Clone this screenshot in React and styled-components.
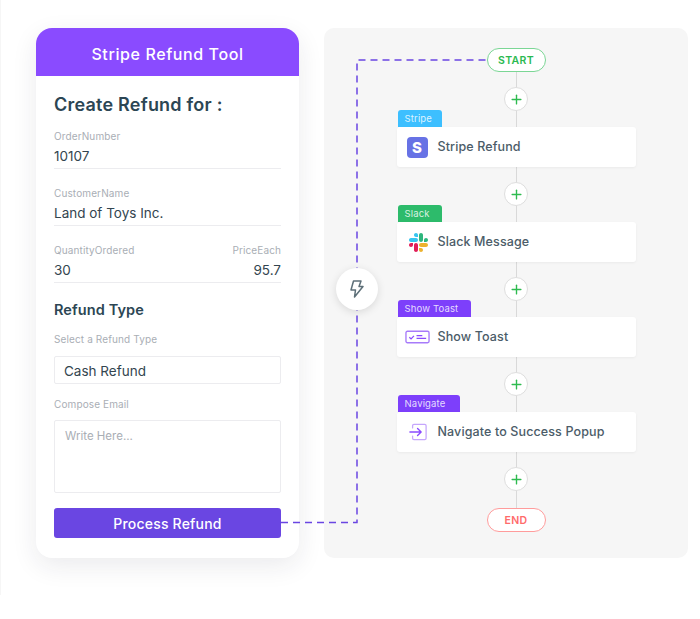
import React from 'react';
import styled, { createGlobalStyle } from 'styled-components';
import { Plus } from 'lucide-react';

const Global = createGlobalStyle`
  html, body { margin: 0; padding: 0; background: #fff; }
  * { box-sizing: border-box; }
  body { font-family: Inter, "Open Sans", sans-serif; }
`;

const Page = styled.div`
  position: relative;
  width: 700px;
  height: 595px;
  padding: 28px 12px 0 35px;
  border-left: 1px solid #f6f6f6;
  display: flex;
  align-items: flex-start;
  gap: 25px;
`;

// left card
const Card = styled.div`
  width: 263px;
  height: 530px;
  flex: none;
  background: #fff;
  border-radius: 16px;
  box-shadow: 0 8px 26px rgba(30, 30, 50, 0.09);
  overflow: hidden;
`;

const CardHeader = styled.div`
  height: 48px;
  padding-top: 4px;
  background: #8a4bff;
  color: #fff;
  font-size: 16px;
  font-weight: 500;
  letter-spacing: 0.6px;
  display: flex;
  align-items: center;
  justify-content: center;
`;

const CardBody = styled.div`
  padding: 19px 18px 20px;
  display: flex;
  flex-direction: column;
`;

const Title = styled.h2`
  margin: 0;
  font-size: 18px;
  line-height: 20px;
  font-weight: 600;
  color: #2c4654;
  letter-spacing: 0.22px;
`;

const SubTitle = styled(Title)`
  margin-top: 17px;
  font-size: 14.5px;
  letter-spacing: 0.1px;
`;

const Field = styled.div`
  margin-top: ${p => p.$top || 18}px;
  height: 39px;
  border-bottom: 1px solid #ececef;
`;

const FieldRow = styled(Field)`
  display: flex;
  justify-content: space-between;
`;

const FieldCell = styled.div`
  text-align: ${p => (p.$right ? 'right' : 'left')};
`;

const Label = styled.div`
  font-size: 10px;
  line-height: 12px;
  color: #a9aeb5;
  letter-spacing: 0.12px;
  padding-top: ${p => p.$top || 0}px;
`;

const Value = styled.div`
  margin-top: 5px;
  font-size: 13.5px;
  line-height: 18px;
  color: #33454f;
`;

const SelectBox = styled.input`
  display: block;
  width: 100%;
  height: 28px;
  margin-top: 11px;
  padding: 2px 9px 0;
  border: 1px solid #ececef;
  border-radius: 2px;
  outline: none;
  font: inherit;
  font-size: 13.5px;
  color: #33454f;
`;

const TextArea = styled.textarea`
  display: block;
  width: 100%;
  height: 73px;
  margin-top: 10px;
  padding: 8px 10px;
  border: 1px solid #ececef;
  border-radius: 2px;
  outline: none;
  resize: none;
  font: inherit;
  font-size: 11.5px;
  &::placeholder { color: #a9aeb5; opacity: 1; }
`;

const Submit = styled.button`
  height: 30px;
  margin-top: 15px;
  padding: 1px 0 0;
  border: none;
  border-radius: 3px;
  background: #6a46e2;
  color: #fff;
  font: inherit;
  font-size: 14px;
  font-weight: 500;
  letter-spacing: 0.2px;
`;

// flow panel
const Panel = styled.div`
  width: 364px;
  height: 530px;
  flex: none;
  background: #f6f6f6;
  border-radius: 10px;
  padding: 20px 0 0 20px;
`;

const Flow = styled.div`
  position: relative;
  display: flex;
  flex-direction: column;
  align-items: center;
  &::before {
    content: '';
    position: absolute;
    top: 10px;
    bottom: 10px;
    left: 50%;
    width: 1px;
    background: #d9d9d9;
  }
`;

const Pill = styled.div`
  position: relative;
  width: 59px;
  height: 24px;
  margin-top: ${p => p.$top || 0}px;
  border: 1.5px solid ${p => p.$border};
  border-radius: 12px;
  background: #fff;
  color: ${p => p.$color};
  font-size: 10.5px;
  font-weight: 600;
  letter-spacing: 0.3px;
  display: flex;
  align-items: center;
  justify-content: center;
`;

const AddButton = styled.div`
  position: relative;
  width: 24px;
  height: 24px;
  margin-top: 15px;
  border: 1.5px solid #dedede;
  border-radius: 50%;
  background: #fff;
  color: #2ebb4f;
  display: flex;
  align-items: center;
  justify-content: center;
`;

const Step = styled.div`
  position: relative;
  width: 239px;
  margin-top: -1px;
`;

const Tag = styled.div`
  width: ${p => p.$width}px;
  height: 17px;
  margin-left: 1px;
  padding-left: 7px;
  border-radius: 3px 3px 0 0;
  background: ${p => p.$bg};
  color: rgba(255, 255, 255, 0.82);
  font-size: 9.5px;
  line-height: 17px;
  letter-spacing: 0.15px;
`;

const StepCard = styled.div`
  height: 40px;
  padding-bottom: 2px;
  background: #fff;
  border-radius: 3px;
  box-shadow: 0 1px 3px rgba(0, 0, 0, 0.05);
  display: flex;
  align-items: center;
  color: #4b5c68;
  font-size: 12.5px;
  font-weight: 450;
  letter-spacing: 0.12px;
`;

const IconSlot = styled.div`
  width: 41px;
  flex: none;
  padding-top: 2px;
  display: flex;
  align-items: center;
  justify-content: center;
`;

const StripeMark = styled.div`
  width: 21px;
  height: 21px;
  border-radius: 4px;
  background: #6772e5;
  color: #fff;
  font-size: 15px;
  font-weight: 800;
  display: flex;
  align-items: center;
  justify-content: center;
`;

const BrandSvg = styled.svg`
  margin-left: ${p => p.$shift || 0}px;
`;

// overlays
const Wire = styled.svg`
  position: absolute;
  left: -1px;
  top: 0;
  pointer-events: none;
`;

const Trigger = styled.div`
  position: absolute;
  left: 335px;
  top: 268px;
  width: 42px;
  height: 42px;
  border-radius: 50%;
  background: #fff;
  box-shadow: 0 2px 8px rgba(0, 0, 0, 0.12);
  color: #5d6f78;
  display: flex;
  align-items: center;
  justify-content: center;
`;

const SlackIcon = () => (
  <BrandSvg $shift={2} width="19" height="19" viewBox="0 0 122.8 122.8">
    <path fill="#E01E5A" d="M25.8 77.6c0 7.1-5.8 12.9-12.9 12.9S0 84.7 0 77.6s5.8-12.9 12.9-12.9h12.9v12.9z" />
    <path fill="#E01E5A" d="M32.3 77.6c0-7.1 5.8-12.9 12.9-12.9s12.9 5.8 12.9 12.9v32.3c0 7.1-5.8 12.9-12.9 12.9s-12.9-5.8-12.9-12.9V77.6z" />
    <path fill="#36C5F0" d="M45.2 25.8c-7.1 0-12.9-5.8-12.9-12.9S38.1 0 45.2 0s12.9 5.8 12.9 12.9v12.9H45.2z" />
    <path fill="#36C5F0" d="M45.2 32.3c7.1 0 12.9 5.8 12.9 12.9s-5.8 12.9-12.9 12.9H12.9C5.8 58.1 0 52.3 0 45.2s5.8-12.9 12.9-12.9h32.3z" />
    <path fill="#2EB67D" d="M97 45.2c0-7.1 5.8-12.9 12.9-12.9s12.9 5.8 12.9 12.9-5.8 12.9-12.9 12.9H97V45.2z" />
    <path fill="#2EB67D" d="M90.5 45.2c0 7.1-5.8 12.9-12.9 12.9s-12.9-5.8-12.9-12.9V12.9C64.7 5.8 70.5 0 77.6 0s12.9 5.8 12.9 12.9v32.3z" />
    <path fill="#ECB22E" d="M77.6 97c7.1 0 12.9 5.8 12.9 12.9s-5.8 12.9-12.9 12.9-12.9-5.8-12.9-12.9V97h12.9z" />
    <path fill="#ECB22E" d="M77.6 90.5c-7.1 0-12.9-5.8-12.9-12.9s5.8-12.9 12.9-12.9h32.3c7.1 0 12.9 5.8 12.9 12.9s-5.8 12.9-12.9 12.9H77.6z" />
  </BrandSvg>
);

const ToastIcon = () => (
  <BrandSvg $shift={1} width="25" height="14" viewBox="0 0 26 14" fill="none" stroke="#a77bfa">
    <rect x="1" y="1" width="24" height="12" rx="1.5" strokeWidth="1.4" />
    <path d="M4.5 7.2l1.8 1.8 3-3.2" strokeWidth="1.3" stroke="#8a4bff" />
    <path d="M12 5.5h6M12 8.5h10" strokeWidth="1.3" stroke="#8a4bff" />
  </BrandSvg>
);

const NavigateIcon = () => (
  <BrandSvg $shift={2} width="18" height="18" viewBox="0 0 20 19" fill="none" strokeLinecap="round" strokeLinejoin="round">
    <path d="M4 5V2.5A1.5 1.5 0 0 1 5.5 1h12A1.5 1.5 0 0 1 19 2.5v14a1.5 1.5 0 0 1-1.5 1.5h-12A1.5 1.5 0 0 1 4 16.5V14" stroke="#c5a6fc" strokeWidth="1.4" />
    <path d="M1 9.5h12M9.5 5.5l4 4-4 4" stroke="#8a4bff" strokeWidth="1.5" />
  </BrandSvg>
);

const BoltIcon = () => (
  <svg width="14" height="18" viewBox="0 0 14 18" fill="none" stroke="currentColor" strokeWidth="1.5" strokeLinejoin="round">
    <path d="M3.5 1H11L9 6.5h4L4.5 17l1-7H1z" />
  </svg>
);

const steps = [
  { tag: 'Stripe', width: 44, bg: '#3dbfff', label: 'Stripe Refund', icon: <StripeMark>S</StripeMark> },
  { tag: 'Slack', width: 44, bg: '#2dbb6b', label: 'Slack Message', icon: <SlackIcon /> },
  { tag: 'Show Toast', width: 73, bg: '#7d3ffb', label: 'Show Toast', icon: <ToastIcon /> },
  { tag: 'Navigate', width: 62, bg: '#7d3ffb', label: 'Navigate to Success Popup', icon: <NavigateIcon /> },
];

const AddStep = () => (
  <AddButton>
    <Plus size={15} strokeWidth={2.2} />
  </AddButton>
);

const App = () => (
  <Page>
    <Global />
    <Card>
      <CardHeader>Stripe Refund Tool</CardHeader>
      <CardBody>
        <Title>Create Refund for :</Title>
        <Field $top={15}>
          <Label>OrderNumber</Label>
          <Value>10107</Value>
        </Field>
        <Field>
          <Label>CustomerName</Label>
          <Value>Land of Toys Inc.</Value>
        </Field>
        <FieldRow>
          <FieldCell>
            <Label>QuantityOrdered</Label>
            <Value>30</Value>
          </FieldCell>
          <FieldCell $right>
            <Label>PriceEach</Label>
            <Value>95.7</Value>
          </FieldCell>
        </FieldRow>
        <SubTitle>Refund Type</SubTitle>
        <Label $top={13}>Select a Refund Type</Label>
        <SelectBox readOnly value="Cash Refund" />
        <Label $top={14}>Compose Email</Label>
        <TextArea placeholder="Write Here..." />
        <Submit>Process Refund</Submit>
      </CardBody>
    </Card>
    <Panel>
      <Flow>
        <Pill $border="#7bd695" $color="#2bb950">START</Pill>
        <AddStep />
        {steps.map(s => (
          <React.Fragment key={s.tag}>
            <Step>
              <Tag $width={s.width} $bg={s.bg}>{s.tag}</Tag>
              <StepCard>
                <IconSlot>{s.icon}</IconSlot>
                {s.label}
              </StepCard>
            </Step>
            <AddStep />
          </React.Fragment>
        ))}
        <Pill $top={17} $border="#ff9c9c" $color="#ff6b6b">END</Pill>
      </Flow>
    </Panel>
    <Wire width="700" height="595" fill="none">
      <path d="M281 522.5H357V60H487" stroke="#6a46e2" strokeWidth="1.5" strokeDasharray="7 5" />
    </Wire>
    <Trigger>
      <BoltIcon />
    </Trigger>
  </Page>
);

export default App;
